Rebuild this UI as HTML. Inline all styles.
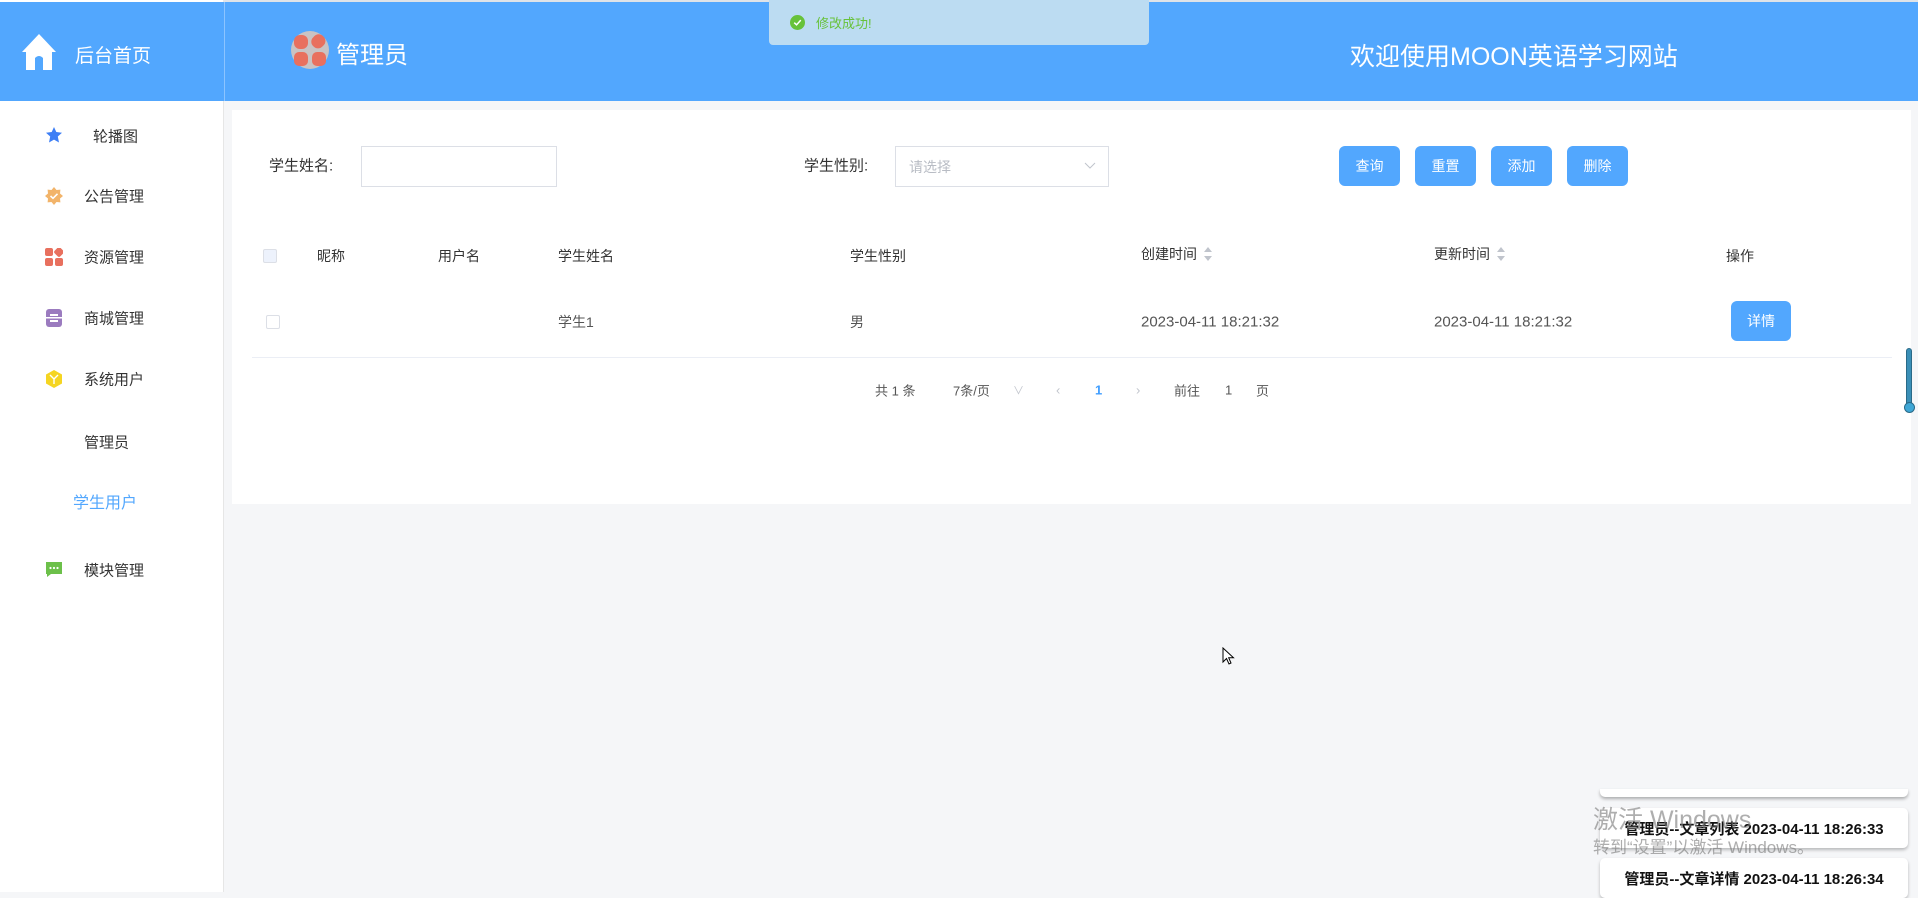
<!DOCTYPE html>
<html><head><meta charset="utf-8"><style>
*{margin:0;padding:0;box-sizing:border-box}
body{width:1918px;height:892px;overflow:hidden;background:#f5f6f8;font-family:"Liberation Sans","Noto Sans CJK SC",sans-serif;color:#333;position:relative}
.a{position:absolute;white-space:nowrap}
.side{left:0;top:0;width:224px;height:892px;background:#fff;border-right:1px solid #e6e6e6}
.top{left:0;top:2px;width:1918px;height:99px;background:#52a7fe}
.mi{font-size:15px;color:#333;transform:translateY(-50%)}
.t{font-size:14px;color:#333;transform:translateY(-50%)}
.btn{background:#52a7fe;color:#fff;border-radius:6px;font-size:14px;display:flex;align-items:center;justify-content:center}
.note{background:#fff;border-radius:5px;box-shadow:0 2px 3px rgba(0,0,0,.25);font-weight:bold;font-size:15px;color:#111;display:flex;align-items:center;justify-content:center}
</style></head><body>
<div class="a" style="left:0;top:0;width:1918px;height:2px;background:#dfe3e8"></div>
<div class="a side"></div>
<div class="a top"></div>
<div class="a" style="left:224px;top:2px;width:1px;height:99px;background:#8cc4ff"></div>
<svg class="a" style="left:20px;top:32px" width="38" height="40" viewBox="0 0 38 40"><path d="M19 2 L36 20 L32 20 L32 38 L23 38 L23 26 Q19 22 15 26 L15 38 L6 38 L6 20 L2 20 Z" fill="#fff"/></svg>
<div class="a" style="left:75px;top:41px;font-size:19px;color:#fff">后台首页</div>
<svg class="a" style="left:290px;top:30px" width="40" height="40" viewBox="0 0 40 40"><circle cx="20" cy="20" r="19" fill="#c9c3c3"/><rect x="4" y="5" width="14" height="14" rx="6" fill="#e8705e"/><rect x="22" y="4" width="13" height="14" rx="6" fill="#e8705e" transform="rotate(45 28 11)"/><rect x="4" y="22" width="14" height="14" rx="5" fill="#e8705e"/><rect x="22" y="22" width="14" height="14" rx="5" fill="#e8705e"/></svg>
<div class="a" style="left:336px;top:35px;font-size:24px;color:#fff">管理员</div>
<div class="a" style="left:769px;top:0;width:380px;height:45px;background:#bcdcf2;border-radius:0 0 4px 4px"></div>
<svg class="a" style="left:790px;top:15px" width="15" height="15" viewBox="0 0 16 16"><circle cx="8" cy="8" r="8" fill="#67c23a"/><path d="M4.5 8.2 L7 10.5 L11.5 5.5" stroke="#fff" stroke-width="1.6" fill="none"/></svg>
<div class="a" style="left:816px;top:13px;font-size:13px;color:#67c23a">修改成功!</div>
<div class="a" style="left:1350px;top:37px;font-size:25px;color:#fff">欢迎使用MOON英语学习网站</div>
<!-- sidebar -->
<svg class="a" style="left:45px;top:126px" width="18" height="18" viewBox="0 0 18 18"><path d="M9 1 L11.3 6 L17 6.7 L12.8 10.5 L14 16.5 L9 13.6 L4 16.5 L5.2 10.5 L1 6.7 L6.7 6 Z" fill="#3d7ef5"/></svg>
<div class="a mi" style="left:93px;top:136px">轮播图</div>
<svg class="a" style="left:45px;top:187px" width="18" height="18" viewBox="0 0 18 18"><path d="M9 0 L11.5 3 L15.4 2.6 L15 6.5 L18 9 L15 11.5 L15.4 15.4 L11.5 15 L9 18 L6.5 15 L2.6 15.4 L3 11.5 L0 9 L3 6.5 L2.6 2.6 L6.5 3 Z" fill="#f2b46a"/><path d="M5.5 9 L8 11.3 L12.5 6.8" stroke="#fff" stroke-width="1.6" fill="none"/></svg>
<div class="a mi" style="left:84px;top:196px">公告管理</div>
<svg class="a" style="left:45px;top:248px" width="18" height="18" viewBox="0 0 18 18"><rect x="0" y="0" width="8" height="8" rx="2" fill="#e8705e"/><rect x="10" y="0" width="8" height="8" rx="2" fill="#e8705e" transform="rotate(45 14 4)"/><rect x="0" y="10" width="8" height="8" rx="2" fill="#e8705e"/><rect x="10" y="10" width="8" height="8" rx="2" fill="#e8705e"/></svg>
<div class="a mi" style="left:84px;top:257px">资源管理</div>
<svg class="a" style="left:45px;top:309px" width="18" height="18" viewBox="0 0 18 18"><rect x="1" y="0" width="16" height="18" rx="3" fill="#9b7bbf"/><rect x="5" y="5" width="8" height="2" fill="#fff"/><rect x="5" y="11" width="8" height="2" fill="#fff"/><rect x="1" y="8" width="16" height="1.5" fill="#fff"/></svg>
<div class="a mi" style="left:84px;top:318px">商城管理</div>
<svg class="a" style="left:45px;top:370px" width="18" height="18" viewBox="0 0 18 18"><path d="M9 0 L17 4.5 L17 13.5 L9 18 L1 13.5 L1 4.5 Z" fill="#f5d522"/><path d="M5 5 L9 9 L13 5 M9 9 L9 14" stroke="#fff" stroke-width="1.4" fill="none"/></svg>
<div class="a mi" style="left:84px;top:379px">系统用户</div>
<div class="a mi" style="left:84px;top:442px">管理员</div>
<div class="a mi" style="left:73px;top:501px;color:#52a7fe;font-size:16px">学生用户</div>
<svg class="a" style="left:45px;top:562px" width="18" height="16" viewBox="0 0 18 16"><path d="M1 0 H17 V12 H6 L2 15 V12 H1 Z" fill="#6cc04a"/><circle cx="5.5" cy="6" r="1.1" fill="#fff"/><circle cx="9" cy="6" r="1.1" fill="#fff"/><circle cx="12.5" cy="6" r="1.1" fill="#fff"/></svg>
<div class="a mi" style="left:84px;top:570px">模块管理</div>
<!-- card -->
<div class="a" style="left:232px;top:110px;width:1679px;height:394px;background:#fff"></div>
<div class="a t" style="left:269px;top:165px;font-size:15px">学生姓名:</div>
<div class="a" style="left:361px;top:146px;width:196px;height:41px;border:1px solid #dcdfe6"></div>
<div class="a t" style="left:804px;top:165px;font-size:15px">学生性别:</div>
<div class="a" style="left:895px;top:146px;width:214px;height:41px;border:1px solid #dcdfe6"></div>
<div class="a t" style="left:909px;top:167px;color:#b8bcc4">请选择</div>
<svg class="a" style="left:1084px;top:162px" width="12" height="8" viewBox="0 0 12 8"><path d="M1 1 L6 6 L11 1" stroke="#c0c4cc" fill="none"/></svg>
<div class="a btn" style="left:1339px;top:146px;width:61px;height:40px">查询</div>
<div class="a btn" style="left:1415px;top:146px;width:61px;height:40px">重置</div>
<div class="a btn" style="left:1491px;top:146px;width:61px;height:40px">添加</div>
<div class="a btn" style="left:1567px;top:146px;width:61px;height:40px">删除</div>
<div class="a" style="left:263px;top:249px;width:14px;height:14px;border:1px solid #dcdfe6;background:#edf2fc;border-radius:2px"></div>
<div class="a t" style="left:317px;top:256px">昵称</div>
<div class="a t" style="left:438px;top:256px">用户名</div>
<div class="a t" style="left:558px;top:256px">学生姓名</div>
<div class="a t" style="left:850px;top:256px">学生性别</div>
<div class="a t" style="left:1141px;top:254px">创建时间</div>
<svg class="a" style="left:1203px;top:246px" width="10" height="16" viewBox="0 0 10 16"><path d="M5 1 L9 6 L1 6 Z M5 15 L9 10 L1 10 Z" fill="#c0c4cc"/></svg>
<div class="a t" style="left:1434px;top:254px">更新时间</div>
<svg class="a" style="left:1496px;top:246px" width="10" height="16" viewBox="0 0 10 16"><path d="M5 1 L9 6 L1 6 Z M5 15 L9 10 L1 10 Z" fill="#c0c4cc"/></svg>
<div class="a t" style="left:1726px;top:256px">操作</div>
<div class="a" style="left:266px;top:315px;width:14px;height:14px;border:1px solid #dcdfe6;border-radius:2px"></div>
<div class="a t" style="left:558px;top:322px;color:#555">学生1</div>
<div class="a t" style="left:850px;top:322px;color:#555">男</div>
<div class="a t" style="left:1141px;top:322px;color:#555;font-size:15px">2023-04-11 18:21:32</div>
<div class="a t" style="left:1434px;top:322px;color:#555;font-size:15px">2023-04-11 18:21:32</div>
<div class="a btn" style="left:1731px;top:301px;width:60px;height:40px">详情</div>
<div class="a" style="left:252px;top:357px;width:1640px;height:1px;background:#ebeef5"></div>
<div class="a t" style="left:875px;top:390px;color:#555;font-size:13px">共 1 条</div>
<div class="a t" style="left:953px;top:390px;color:#555;font-size:13px">7条/页</div>
<div class="a t" style="left:1013px;top:390px;color:#c0c4cc;font-size:11px">∨</div>
<div class="a t" style="left:1056px;top:390px;color:#c0c4cc;font-size:13px">‹</div>
<div class="a t" style="left:1095px;top:390px;color:#409eff;font-size:13px;font-weight:bold">1</div>
<div class="a t" style="left:1136px;top:390px;color:#c0c4cc;font-size:13px">›</div>
<div class="a t" style="left:1174px;top:390px;color:#555;font-size:13px">前往</div>
<div class="a t" style="left:1225px;top:390px;color:#555;font-size:13px">1</div>
<div class="a t" style="left:1256px;top:390px;color:#555;font-size:13px">页</div>
<div class="a" style="left:1906px;top:348px;width:6px;height:62px;background:#3a8fb7;border-radius:3px;border:1px solid #2a6a88"></div>
<div class="a" style="left:1904px;top:402px;width:11px;height:11px;background:#3fa7d6;border-radius:50%;border:1px solid #2a6a88"></div>
<svg class="a" style="left:1222px;top:647px" width="13" height="19" viewBox="0 0 13 19"><path d="M1 1 L1 15 L4.5 11.5 L7 17 L9 16 L6.7 10.8 L11.5 10.8 Z" fill="#fff" stroke="#000"/></svg>
<!-- notifications -->
<div class="a" style="left:1600px;top:789px;width:308px;height:8px;background:#fff;border-radius:0 0 5px 5px;box-shadow:0 2px 3px rgba(0,0,0,.3)"></div>
<div class="a note" style="left:1600px;top:808px;width:308px;height:40px">管理员--文章列表 2023-04-11 18:26:33</div>
<div class="a note" style="left:1600px;top:858px;width:308px;height:40px">管理员--文章详情 2023-04-11 18:26:34</div>
<div class="a" style="left:1593px;top:800px;font-size:25px;color:rgba(120,120,120,.6)">激活 Windows</div>
<div class="a" style="left:1593px;top:833px;font-size:17px;color:rgba(120,120,120,.6)">转到“设置”以激活 Windows。</div>
</body></html>
